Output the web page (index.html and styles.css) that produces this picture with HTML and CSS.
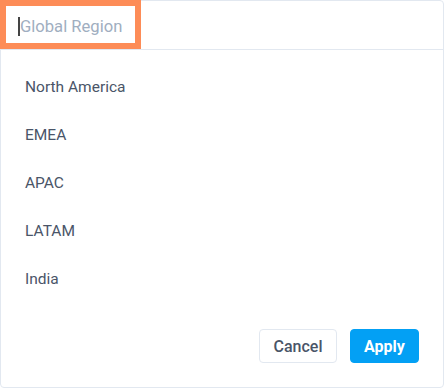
FILE: index.html
```html
<!DOCTYPE html>
<html>
<head>
<meta charset="utf-8">
<link rel="stylesheet" href="styles.css">
</head>
<body>
<div class="panel">
  <div class="search">
    <div class="search-box">
      <span class="caret"></span><span class="placeholder">Global Region</span>
    </div>
  </div>
  <ul class="list">
    <li class="item">North America</li>
    <li class="item">EMEA</li>
    <li class="item">APAC</li>
    <li class="item">LATAM</li>
    <li class="item">India</li>
  </ul>
  <div class="footer">
    <button class="btn btn-cancel">Cancel</button>
    <button class="btn btn-apply">Apply</button>
  </div>
</div>
</body>
</html>
```

FILE: styles.css
```css
html, body {
  margin: 0;
  padding: 0;
  background: #ffffff;
}
body {
  font-family: Roboto, "Liberation Sans", sans-serif;
}
.panel {
  box-sizing: border-box;
  width: 444px;
  height: 388px;
  border: 1px solid #e2e8f0;
  border-radius: 4px;
  display: flex;
  flex-direction: column;
  position: relative;
}
.search {
  height: 49px;
  border-bottom: 1px solid #e2e8f0;
  margin: -1px 0 0 -1px;
  display: flex;
}
.search-box {
  box-sizing: border-box;
  width: 141px;
  height: 49px;
  border: 6px solid #fd8c57;
  display: flex;
  align-items: center;
  padding: 3px 0 0 12px;
}
.caret {
  width: 2px;
  height: 19px;
  background: #444;
}
.placeholder {
  color: #a0aec0;
  font-size: 16.6px;
}
.list {
  list-style: none;
  margin: 0;
  padding: 13px 0 0 0;
  flex: 1;
}
.item {
  height: 48px;
  display: flex;
  align-items: center;
  padding-left: 24px;
  font-size: 15.5px;
  color: #4a5568;
}
.footer {
  display: flex;
  justify-content: flex-end;
  gap: 13px;
  padding: 0 24px 24px 0;
}
.btn {
  height: 34px;
  border-radius: 4px;
  font-family: Roboto, "Liberation Sans", sans-serif;
  font-size: 16px;
  padding: 0;
  cursor: pointer;
}
.btn-cancel {
  background: #fff;
  border: 1px solid #e2e8f0;
  color: #4a5568;
  font-weight: 500;
  width: 78px;
}
.btn-apply {
  background: #03a0f4;
  border: 1px solid #03a0f4;
  color: #fff;
  font-weight: 700;
  width: 69px;
}
```
